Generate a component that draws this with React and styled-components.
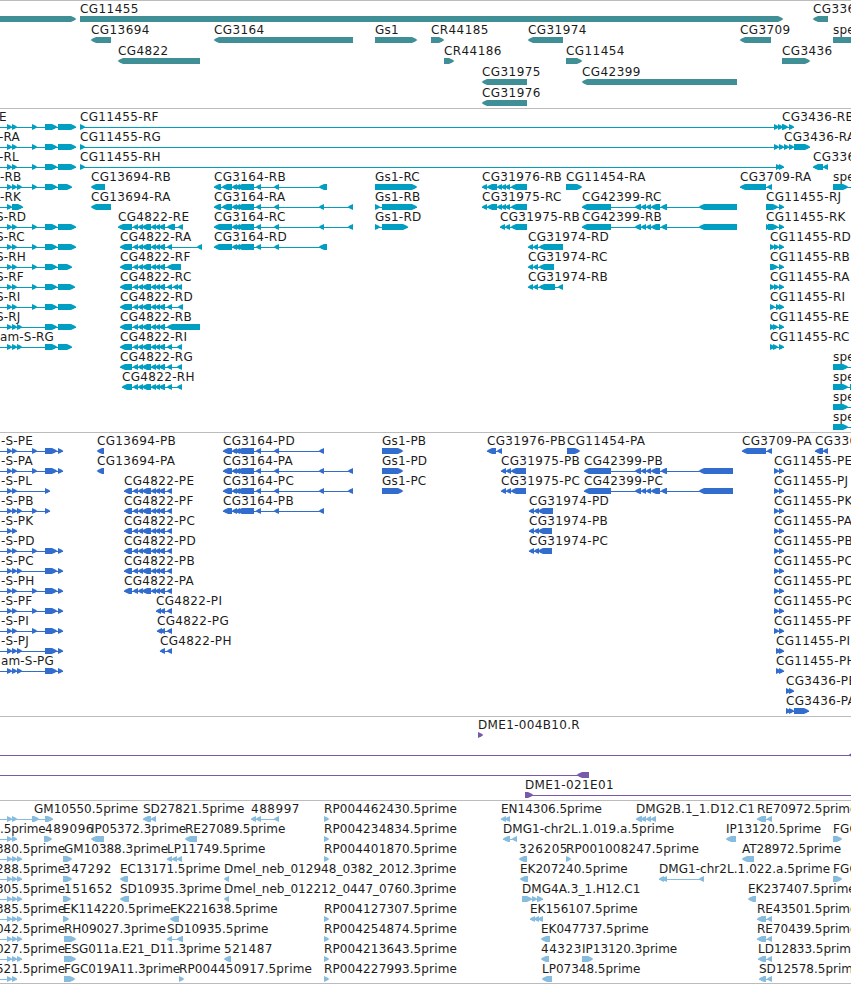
import React from "react";
import styled, { createGlobalStyle } from "styled-components";

const Global = createGlobalStyle`
  body { margin: 0; background: #fff; overflow: hidden; }
`;

const Browser = styled.main`
  display: flex;
  flex-direction: column;
  width: 851px;
  height: 984px;
  overflow: hidden;
  font-family: "DejaVu Sans", sans-serif;
  font-size: 12px;
  color: #000;
`;

const Track = styled.section`
  box-sizing: border-box;
  flex: none;
  height: ${(p) => p.$height}px;
  border-top: 1px solid #bcbcbc;
  color: ${(p) => p.$color};
`;

const Baseline = styled.div`
  flex: none;
  height: 1px;
  background: #bcbcbc;
`;

const Lane = styled.div`
  position: relative;
  height: ${(p) => p.$height}px;
`;

const Feature = styled.div`
  position: absolute;
  top: 0;
  left: ${(p) => p.$x}px;
`;

const Label = styled.span`
  display: block;
  height: 15px;
  line-height: 16px;
  letter-spacing: ${(p) => p.$spacing}px;
  white-space: pre;
  color: #1c1c1c;
`;

const Glyph = styled.svg`
  display: block;
  overflow: visible;
  fill: currentColor;
`;

const exonPath = (a, b, dir) => {
  const head = Math.min(5.4, b - a + 0.4);
  const tip = b + 0.4;
  const back = a - 0.4;
  return dir > 0
    ? `M${a} 0H${tip - head}L${tip - head * 0.4} 1.6L${tip} 2.9L${tip - head * 0.4} 4.4L${tip - head} 6H${a}Z`
    : `M${b} 0H${back + head}L${back + head * 0.4} 1.6L${back} 2.9L${back + head * 0.4} 4.4L${back + head} 6H${b}Z`;
};

const letterSpacing = (name) => {
  if (!name) return 0;
  const digits = (name.match(/\d/g) || []).length;
  const base = (digits * 0.37) / name.length;
  if (name.startsWith("RP")) return base - 0.08;
  if (name.startsWith("DMG1")) return base - 0.06;
  if (name.startsWith("DMG")) return base - 0.08;
  if (name.startsWith("Dmel")) return base - 0.15;
  if (name.startsWith("ESG") || name.startsWith("FGC0")) return base - 0.22;
  if (name.includes("prime")) return base - 0.17;
  return base + 0.16;
};

function Item({ data }) {
  const [name, x, dir, exons, extend] = data;
  const starts = exons.map((e) => e[0]);
  const ends = exons.map((e) => (e.length > 1 ? e[1] : e[0] + 5));
  const from = extend && extend < 0 ? extend : Math.min(...starts, 9999);
  const to = extend && extend > 0 ? extend : Math.max(...ends, -9999);
  const width = Math.max(1, to - from);
  return (
    <Feature $x={x}>
      <Label $spacing={letterSpacing(name)}>{name}</Label>
      {(exons.length > 0 || extend) && (
        <Glyph width={width} height="6" viewBox={`${x} 0 ${width} 6`}>
          {(exons.length > 1 || extend) && <rect x={from} y="3" width={width} height="1" />}
          {exons.map((e, i) => (
            <path key={i} d={exonPath(starts[i], ends[i], dir)} />
          ))}
        </Glyph>
      )}
    </Feature>
  );
}

const F = 1;
const R = -1;

const genes = [
  [["", 0, F, [[-20, 76]]], ["CG11455", 80, F, [[80, 783]]], ["CG336", 813, R, [[813, 828]]]],
  [
    ["CG13694", 91, R, [[91, 111]]], ["CG3164", 214, R, [[214, 353]]], ["Gs1", 375, F, [[375, 417]]],
    ["CR44185", 431, F, [[431, 444]]], ["CG31974", 528, R, [[528, 563]]], ["CG3709", 740, R, [[740, 771]]],
    ["spe", 833, F, [[833, 880]]],
  ],
  [
    ["CG4822", 118, R, [[118, 200]]], ["CR44186", 444, F, [[444, 454]]],
    ["CG11454", 566, F, [[566, 582]]], ["CG3436", 782, F, [[782, 810]]],
  ],
  [["CG31975", 482, R, [[482, 527]]], ["CG42399", 582, R, [[582, 737]]]],
  [["CG31976", 482, R, [[482, 527]]]],
];

const amS = (name, x, small, ...bars) => [
  ["", 0, F, [...small.map((s) => [s]), ...bars], -5],
  [name, x, F, []],
];
const core = [[133], [138], [142, 151], [151], [155], [159, 165]];
const t4822 = (name, x, ...tail) => [name, x, R, [[x, 132], ...core, ...tail]];
const mid3164 = [[232], [235], [237, 254], [256], [274]];
const t3164 = (name, first, ...tail) => [name, 214, R, [...first, ...mid3164, ...tail]];
const t31976 = (name) => [name, 482, R, [[482], [487, 497], [497], [501], [505], [511, 527]]];
const t42399 = (name, x, end) => [name, x, R, [[x, 611], [635, 641], [641], [646], [651, 660], [661, 667], [699, end]]];
const spen = (...more) => ["spe", 833, F, [[833, 848], ...more], 870];

const transcripts = [
  [...amS("E", -1, [7, 12, 32], [45, 57], [58, 76]), ["CG11455-RF", 80, F, [[80], [774], [778]]], ["CG3436-RB", 782, F, [[782, 788], [789]]]],
  [...amS("-RA", -1, [7, 12, 32], [45, 57], [58, 76]), ["CG11455-RG", 80, F, [[80], [774], [779]]], ["CG3436-RA", 784, F, [[784], [789], [794, 810]]]],
  [...amS("-RL", -1, [7, 12, 32], [45, 57], [58, 76]), ["CG11455-RH", 80, F, [[80], [776], [779]]], ["CG336", 813, R, [[813, 823], [823]]]],
  [
    ...amS("-RB", 0, [7, 12, 17, 32], [45, 57], [58, 72]), ["CG13694-RB", 91, R, [[91, 105]]],
    t3164("CG3164-RB", [[214, 221], [222, 232]], [319, 327]), ["Gs1-RC", 375, F, [[375, 417]]],
    t31976("CG31976-RB"), ["CG11454-RA", 566, F, [[566, 582]]], ["CG3709-RA", 740, R, [[740, 766], [767]]], spen(),
  ],
  [
    ...amS("-RK", 0, [7], [12, 23]), ["CG13694-RA", 91, R, [[91, 111]]],
    t3164("CG3164-RA", [[214, 221], [222, 232]], [319], [348]), ["Gs1-RB", 375, F, [[375], [382, 417]]],
    t31976("CG31975-RC"), t42399("CG42399-RC", 582, 737), ["CG11455-RJ", 766, F, [[766, 778], [779]]],
  ],
  [
    ...amS("S-RD", -4, [7, 12, 32], [45, 57], [58, 76]), t4822("CG4822-RE", 118, [167, 175], [178]),
    t3164("CG3164-RC", [[214, 232]], [319], [348]), ["Gs1-RD", 375, F, [[375], [382, 408]]],
    ["CG31975-RB", 500, R, [[500], [505], [511, 527]]], t42399("CG42399-RB", 582, 737),
    ["CG11455-RK", 766, F, [[766], [768, 778], [779]]],
  ],
  [
    ...amS("S-RC", -4, [7, 12, 32], [45, 57], [58, 76]), t4822("CG4822-RA", 120, [167], [197]),
    t3164("CG3164-RD", [[214, 232]], [319, 327]), ["CG31974-RD", 528, R, [[528], [533], [539, 563]]],
    ["CG11455-RD", 770, F, [[770], [774], [779]]],
  ],
  [
    ...amS("S-RH", -4, [7, 12, 32], [45, 57], [58, 72]), t4822("CG4822-RF", 120, [167, 181]),
    ["CG31974-RC", 528, R, [[528], [533], [539, 554]]], ["CG11455-RB", 770, F, [[770, 778], [779]]],
  ],
  [
    ...amS("S-RF", -4, [7, 12, 32], [45, 57], [58, 75]), t4822("CG4822-RC", 120, [167], [173], [177]),
    ["CG31974-RB", 528, R, [[528], [533], [539, 555], [558]]], ["CG11455-RA", 770, F, [[770], [774], [779]]],
  ],
  [...amS("S-RI", -4, [7, 12, 32], [45, 57], [58, 76]), t4822("CG4822-RD", 120, [167], [178]), ["CG11455-RI", 770, F, [[770], [776], [779]]]],
  [...amS("S-RJ", -4, [7, 12, 17], [45, 57], [58, 76]), t4822("CG4822-RB", 120, [167, 200]), ["CG11455-RE", 770, F, [[770], [773], [779]]]],
  [...amS("am-S-RG", 0, [7, 12, 17], [45, 57], [58, 72]), t4822("CG4822-RI", 120, [167], [177]), ["CG11455-RC", 770, F, [[770], [773], [779]]]],
  [t4822("CG4822-RG", 120, [167], [177]), spen()],
  [t4822("CG4822-RH", 122, [167], [177]), spen([850, 860])],
  [spen()],
  [spen()],
];

const p4822 = (name) => t4822(name, 124, [167]);
const p3164 = (name, ...tail) => [name, 223, R, [[223, 232], ...mid3164, [319], ...tail]];
const gs1 = (name) => [name, 382, F, [[382, 403]]];
const p31975 = (name) => [name, 501, R, [[501], [506], [511, 526]]];
const p31974 = (name, end) => [name, 529, R, [[529], [534], [538, end]]];
const p11455 = (name) => [name, 774, F, [[774], [779]]];

const proteins = [
  [
    ...amS("-S-PE", 1, [7, 12, 32], [45, 57], [58, 63]), ["CG13694-PB", 97, R, [[97, 104]]], p3164("CG3164-PD"), gs1("Gs1-PB"),
    ["CG31976-PB", 487, R, [[487, 496], [497]]], ["CG11454-PA", 567, F, [[567, 580]]],
    ["CG3709-PA", 742, R, [[742, 766], [767]]], ["CG336", 815, R, [[815, 823], [823]]],
  ],
  [
    ...amS("-S-PA", 1, [7, 12, 32], [45, 57], [58, 63]), ["CG13694-PA", 97, R, [[97, 104]]], p3164("CG3164-PA", [348]),
    gs1("Gs1-PD"), p31975("CG31975-PB"), t42399("CG42399-PB", 584, 733), p11455("CG11455-PE"),
  ],
  [
    ...amS("-S-PL", 1, [7, 12, 45]), p4822("CG4822-PE"), p3164("CG3164-PC", [348]), gs1("Gs1-PC"),
    p31975("CG31975-PC"), t42399("CG42399-PC", 584, 733), p11455("CG11455-PJ"),
  ],
  [...amS("-S-PB", 1, [7, 12, 17, 32, 45]), p4822("CG4822-PF"), p3164("CG3164-PB"), p31974("CG31974-PD", 553), p11455("CG11455-PK")],
  [...amS("-S-PK", 1, [7, 12]), p4822("CG4822-PC"), p31974("CG31974-PB", 552), p11455("CG11455-PA")],
  [...amS("-S-PD", 1, [7, 12, 32], [45, 57], [58]), p4822("CG4822-PD"), p31974("CG31974-PC", 552), p11455("CG11455-PB")],
  [...amS("-S-PC", 1, [7, 12, 17], [45, 57], [58]), p4822("CG4822-PB"), p11455("CG11455-PC")],
  [...amS("-S-PH", 1, [7, 12, 32], [45, 57], [58]), p4822("CG4822-PA"), p11455("CG11455-PD")],
  [...amS("-S-PF", 1, [7, 12, 32], [45, 57], [58]), ["CG4822-PI", 156, R, [[156], [160], [167]]], p11455("CG11455-PG")],
  [...amS("-S-PI", 1, [7, 12, 32], [45, 57], [58]), ["CG4822-PG", 157, R, [[157], [160], [167]]], p11455("CG11455-PF")],
  [...amS("-S-PJ", 1, [7, 12, 17], [45, 57], [58]), ["CG4822-PH", 160, R, [[160], [167]]], ["CG11455-PI", 776, F, [[776], [779]]]],
  [...amS("am-S-PG", 1, [7, 12, 17], [45, 57], [58]), ["CG11455-PH", 776, F, [[776], [779]]]],
  [["CG3436-PB", 786, F, [[786], [789]]]],
  [["CG3436-PA", 786, F, [[786], [789], [794, 809]]]],
];

const clones = [
  [["DME1-004B10.R", 478, F, [[478, 483]]]],
  [["", 0, R, [[849, 862]], -5]],
  [["", 0, R, [[577, 589]], -5]],
  [["DME1-021E01", 525, F, [[525, 533]], 860]],
];

const rp = (n) => [`RP004${n}.5prime`, 324, F, [[324, 329]]];
const left = (name, small, ...bars) => amS(name, -4, small, ...bars);
const pair = (name, x) => [name, x, R, [[x, 766], [767]]];

const ests = [
  [
    ...left("", [7, 12], [32, 39], [45, 53]), ["GM10550.5prime", 34, F, []], ["SD27821.5prime", 143, R, [[143, 151], [151]]],
    ["488997", 251, R, [[251], [256], [274]]], rp("462430"), ["EN14306.5prime", 501, R, [[501], [505]]],
    ["DMG2B.1_1.D12.C1", 636, R, [[636, 642], [641], [646], [651]]], pair("RE70972.5prime", 757),
  ],
  [
    ...amS(".5prime", 0, [7, 12]), ["489096", 45, F, [[44, 52]]], ["IP05372.3prime", 91, R, [[91, 104]]],
    ["RE27089.5prime", 185, R, [[185, 197]]], rp("234834"), ["DMG1-chr2L.1.019.a.5prime", 503, R, [[503, 510], [512]]],
    ["IP13120.5prime", 726, R, [[726, 736]]], ["FGC", 833, F, [[833, 842]]],
  ],
  [
    ...left("380.5prime", [7, 12, 17]), ["GM10388.3prime", 64, F, [[63, 72]]], ["LP11749.5prime", 167, R, [[167], [172], [177]]],
    rp("401870"), ["326205", 519, R, [[519, 527]]], ["RP001008247.5prime", 566, F, [[566]]], ["AT28972.5prime", 742, R, [[742, 754]]],
  ],
  [
    ...left("288.5prime", [7, 12, 17]), ["347292", 63, F, [[63, 72]]], ["EC13171.5prime", 120, R, [[120, 128]]],
    ["Dmel_neb_012948_0382_2012.3prime", 224, R, [[224]]], ["EK207240.5prime", 520, R, [[520, 528]]],
    ["DMG1-chr2L.1.022.a.5prime", 659, R, [[659], [662], [699]]], ["FGC", 833, F, [[833, 842]]],
  ],
  [
    ...left("305.5prime", [7, 12, 17]), ["151652", 64, F, [[63, 71]]], ["SD10935.3prime", 120, R, [[120, 129]]],
    ["Dmel_neb_012212_0447_0760.3prime", 224, R, [[224]]], ["DMG4A.3_1.H12.C1", 522, F, [[522, 532], [532], [537, 543]]],
    ["EK237407.5prime", 748, R, [[748, 756]]],
  ],
  [
    ...left("385.5prime", [7, 12, 17]), ["EK114220.5prime", 63, F, [[63, 69]]], ["EK221638.5prime", 170, R, [[170, 179]]],
    rp("127307"), ["EK156107.5prime", 530, R, [[530], [534], [538]]], pair("RE43501.5prime", 757),
  ],
  [
    ...left("042.5prime", [7, 12, 17]), ["RH09027.3prime", 64, F, [[64, 76]]], ["SD10935.5prime", 167, R, [[167], [177, 183]]],
    rp("254874"), ["EK047737.5prime", 541, R, [[541, 550]]], pair("RE70439.5prime", 757),
  ],
  [
    ...left("027.5prime", [7, 12, 17]), ["ESG011a.E21_D11.3prime", 64, F, [[64, 76]]], ["521487", 224, R, [[224, 231]]],
    rp("213643"), ["44323", 541, R, [[541, 549]]], ["IP13120.3prime", 582, F, [[582, 593]]], pair("LD12833.5prime", 758),
  ],
  [
    ...left("521.5prime", [7, 12]), ["FGC019A11.3prime", 64, F, [[64, 75]]], ["RP004450917.5prime", 179, F, [[179]]],
    rp("227993"), ["LP07348.5prime", 542, R, [[542, 552]]], pair("SD12578.5prime", 759),
  ],
];

const tracks = [
  { id: "genes", color: "#408f96", height: 108, lane: 21, lanes: genes },
  { id: "transcripts", color: "#009fc1", height: 324, lane: 20, lanes: transcripts },
  { id: "proteins", color: "#326dcd", height: 284, lane: 20, lanes: proteins },
  { id: "clones", color: "#7859a9", height: 84, lane: 20, lanes: clones },
  { id: "ests", color: "#87bcde", height: 183, lane: 20, lanes: ests },
];

export default function App() {
  return (
    <>
      <Global />
      <Browser>
        {tracks.map((t) => (
          <Track key={t.id} $height={t.height} $color={t.color}>
            {t.lanes.map((items, i) => (
              <Lane key={i} $height={t.lane}>
                {items.map((d, j) => (
                  <Item key={j} data={d} />
                ))}
              </Lane>
            ))}
          </Track>
        ))}
        <Baseline />
      </Browser>
    </>
  );
}
